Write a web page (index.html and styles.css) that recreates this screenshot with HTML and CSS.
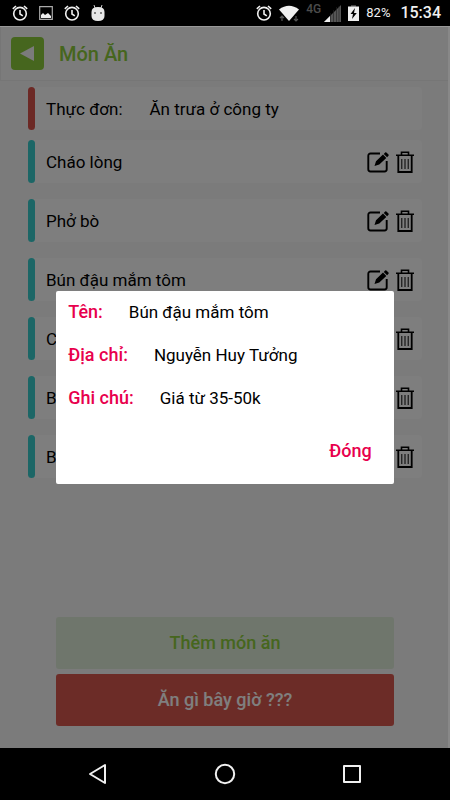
FILE: index.html
```html
<!DOCTYPE html>
<html lang="vi">
<head>
<meta charset="utf-8">
<meta name="viewport" content="width=device-width, initial-scale=1">
<title>Món Ăn</title>
<link rel="stylesheet" href="styles.css">
</head>
<body>
<svg class="defs" aria-hidden="true">
  <symbol id="alarm" viewBox="0 0 16 16">
    <g fill="none" stroke="currentColor" stroke-width="1.6"><circle cx="8" cy="8.700" r="6.300"/><path d="M8 5v4l2.800 1.800M.800 3.800 4 1M15.200 3.800 12 1"/></g>
  </symbol>
  <symbol id="edit" viewBox="0 0 22 22">
    <path d="M13 2.500H3.500a2.200 2.200 0 0 0-2.200 2.200v13.600a2.200 2.200 0 0 0 2.200 2.200h14a2.200 2.200 0 0 0 2.200-2.200V10" fill="none" stroke="currentColor" stroke-width="1.900"/>
    <path d="m7.500 15 1.500-4.800 7-6.600 3.300 3.300-7 6.700zM16.800 2.900l1.300-1.300q.700-.5 1.300 0L21.500 3.600q.5.600 0 1.200l-1.400 1.400z" fill="currentColor"/>
  </symbol>
  <symbol id="trash" viewBox="0 0 18 22">
    <g fill="none" stroke="currentColor"><path d="M0 4.300h18M5.500 4V1.200h7V4" stroke-width="1.600"/><path d="M2.300 4v17h13.400V4" stroke-width="1.800"/><path d="M5.800 8v10M9 8v10M12.200 8v10" stroke-width="1"/></g>
  </symbol>
</svg>
<header class="status">
  <div class="status-group notices">
    <svg width="16" height="16"><use href="#alarm"/></svg>
    <svg width="14" height="14" viewBox="0 0 14 14"><path d="M.700.700h12.600v12.600H.700z" fill="none" stroke="#aaa" stroke-width="1.200"/><path d="M2 12V9l2-2 2 2 3-2 3 3v2z" fill="#eee"/></svg>
    <svg width="16" height="16"><use href="#alarm"/></svg>
    <svg width="14" height="16" viewBox="0 0 14 16"><path d="m3 0 1 3M11 0l-1 3" stroke="#ccc"/><path d="M.5 7q0-5 6.500-5t6.500 5v4q0 5-6.500 5T.5 11z" fill="#e8e8e8"/><circle cx="4" cy="8" r=".8"/><circle cx="10" cy="8" r=".8"/></svg>
  </div>
  <div class="status-group signals">
    <svg width="16" height="16"><use href="#alarm"/></svg>
    <svg class="wifi" width="20" height="17" viewBox="0 0 20 17"><path d="M3 16v-5m-2 2 2-2 2 2M17 11v5m-2-2 2 2 2-2" fill="none" stroke="#555" stroke-width="1.200"/><path d="M0 4.500q10-7.500 20 0L10 16z" fill="#f0f0f0"/></svg>
    <span class="network">4G</span>
    <svg class="bars" width="17" height="17" viewBox="0 0 17 17"><path d="M17 0v17H0z" fill="#555"/><path d="M6 11v6H0z" fill="#f0f0f0"/><path d="M6.500 8v9M9.500 5v12M12.500 2v15M15 1v16" stroke="#222" stroke-width=".6"/></svg>
    <svg class="battery" width="11" height="16" viewBox="0 0 11 16"><path d="M3 0h5v2H3z" fill="#444"/><path d="M0 1.500h11V16H0z" fill="#eee"/><path d="m7 3-4.500 6H5l-1 5 4.800-6H6z"/></svg>
    <span class="percent">82%</span>
    <time class="clock">15:34</time>
  </div>
</header>
<main class="app">
  <div class="titlebar">
    <button class="back" aria-label="Quay lại"><svg width="14" height="15" viewBox="0 0 14 15"><path d="M0 7.500 14 0v15z" fill="currentColor"/></svg></button>
    <h1>Món Ăn</h1>
  </div>
  <section class="content">
    <div class="card menu"><span>Thực đơn:</span><span>Ăn trưa ở công ty</span></div>
    <ul class="dishes">
      <li class="card"><span>Cháo lòng</span><button aria-label="Sửa"><svg width="22" height="22"><use href="#edit"/></svg></button><button aria-label="Xóa"><svg width="18" height="22"><use href="#trash"/></svg></button></li>
      <li class="card"><span>Phở bò</span><button aria-label="Sửa"><svg width="22" height="22"><use href="#edit"/></svg></button><button aria-label="Xóa"><svg width="18" height="22"><use href="#trash"/></svg></button></li>
      <li class="card"><span>Bún đậu mắm tôm</span><button aria-label="Sửa"><svg width="22" height="22"><use href="#edit"/></svg></button><button aria-label="Xóa"><svg width="18" height="22"><use href="#trash"/></svg></button></li>
      <li class="card"><span>C</span><button aria-label="Sửa"><svg width="22" height="22"><use href="#edit"/></svg></button><button aria-label="Xóa"><svg width="18" height="22"><use href="#trash"/></svg></button></li>
      <li class="card"><span>B</span><button aria-label="Sửa"><svg width="22" height="22"><use href="#edit"/></svg></button><button aria-label="Xóa"><svg width="18" height="22"><use href="#trash"/></svg></button></li>
      <li class="card"><span>B</span><button aria-label="Sửa"><svg width="22" height="22"><use href="#edit"/></svg></button><button aria-label="Xóa"><svg width="18" height="22"><use href="#trash"/></svg></button></li>
    </ul>
  </section>
  <div class="actions">
    <button class="add">Thêm món ăn</button>
    <button class="pick">Ăn gì bây giờ ???</button>
  </div>
  <div class="overlay">
    <div class="dialog" role="dialog" aria-label="Bún đậu mắm tôm">
      <dl>
        <div><dt>Tên:</dt><dd>Bún đậu mắm tôm</dd></div>
        <div><dt>Địa chỉ:</dt><dd>Nguyễn Huy Tưởng</dd></div>
        <div><dt>Ghi chú:</dt><dd>Giá từ 35-50k</dd></div>
      </dl>
      <button class="close">Đóng</button>
    </div>
  </div>
</main>
<nav class="navbar">
  <button aria-label="Trở lại"><svg width="22" height="22" viewBox="0 0 22 22"><path d="M18 2v18L3 11z"/></svg></button>
  <button aria-label="Trang chủ"><svg width="22" height="22" viewBox="0 0 22 22"><circle cx="11" cy="11" r="9.200"/></svg></button>
  <button aria-label="Gần đây"><svg width="22" height="22" viewBox="0 0 22 22"><path d="M3 3h16v16H3z"/></svg></button>
</nav>
</body>
</html>
```
FILE: styles.css
```css
* { box-sizing: border-box; }
body {
  margin: 0;
  min-height: 100vh;
  display: flex;
  flex-direction: column;
  background: #000;
  color: #000;
  font: 17px/24px Roboto, "Noto Sans", sans-serif;
}
button { border: 0; padding: 0; background: none; color: inherit; font: inherit; }
svg { display: block; }
ul, dl, dd, h1 { margin: 0; padding: 0; }
.defs { position: absolute; width: 0; height: 0; }

.status {
  display: flex;
  justify-content: space-between;
  height: 26px;
  padding: 0 9px 0 12px;
  color: #f0f0f0;
}
.status-group { display: flex; align-items: center; }
.notices { gap: 11px; }
.signals { gap: 7px; }
.network { align-self: flex-start; font-size: 12px; line-height: 18px; color: #4c4c4c; font-weight: 500; }
.bars { margin-left: -4px; }
.percent { font-size: 13px; }
.clock { font-size: 16px; font-weight: 500; margin-left: 3px; }

.app {
  position: relative;
  flex: 1;
  display: flex;
  flex-direction: column;
  background: #f6f6f6;
}
.titlebar {
  display: flex;
  align-items: center;
  gap: 15px;
  height: 55px;
  padding: 0 10px;
  border: 1px solid #ececec;
  background: #f8f8f8;
}
.back {
  display: grid;
  place-items: center;
  width: 33px;
  height: 33px;
  padding-right: 1px;
  border-radius: 4px;
  background: #8ccc3c;
  color: #f6f6f6;
}
h1 { font-size: 20px; font-weight: 500; color: #8ccc3c; }

.content { padding: 6px 28px 0; }
.card {
  display: flex;
  align-items: center;
  gap: 7px;
  height: 43px;
  padding-right: 8px;
  border-radius: 4px;
  background: #fdfdfd;
}
.card::before {
  content: "";
  align-self: stretch;
  width: 7px;
  border-radius: 4px;
  background: #38cccc;
}
.card span { padding-left: 4px; }
.dishes .card span { flex: 1; }
.menu::before { background: #d9534a; }
.menu span + span { padding-left: 20px; }
.dishes { display: grid; gap: 16px; margin-top: 10px; list-style: none; }

.actions {
  display: flex;
  flex-direction: column;
  gap: 5px;
  width: 75%;
  margin: auto auto 22px;
}
.actions button { height: 52px; border-radius: 3px; font-size: 18px; font-weight: 500; }
.actions .add { background: #dfecd8; color: #8ccc3c; }
.actions .pick { background: #d9594e; color: #fff; }

.overlay {
  position: absolute;
  inset: 0;
  display: flex;
  align-items: center;
  justify-content: center;
  border-top: 1px solid #999;
  background: rgba(0, 0, 0, .5);
  box-shadow: inset -2px 0 #888;
}
.dialog {
  display: flex;
  flex-direction: column;
  width: 75%;
  padding: 9px 12px 21px;
  border-radius: 2px;
  background: #fff;
}
dl { display: grid; gap: 19px; }
dl div { display: flex; gap: 26px; }
dt, .close { font-size: 18px; font-weight: 500; color: #e8004d; }
.close { align-self: flex-end; margin: 29px 10px 0 0; }

.navbar {
  display: flex;
  align-items: center;
  justify-content: center;
  gap: 105px;
  height: 52px;
}
.navbar svg { fill: none; stroke: #f0f0f0; stroke-width: 2; stroke-linejoin: round; }
```
